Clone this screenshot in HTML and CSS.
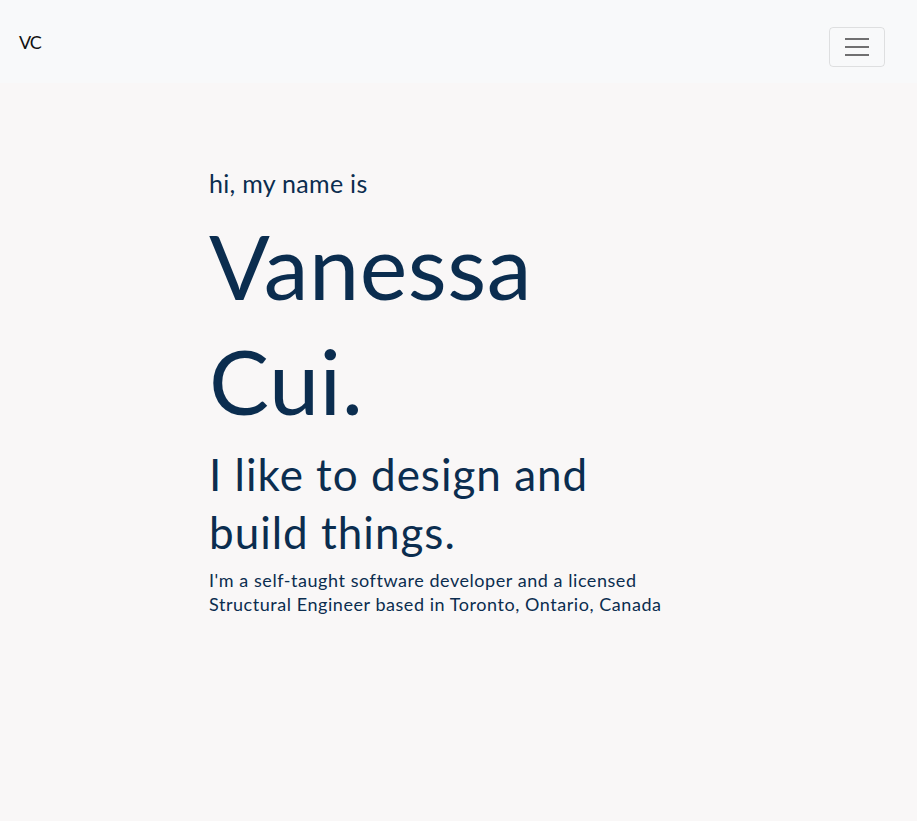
FILE: index.html
```html
<!DOCTYPE html>
<html lang="en">
<head>
<meta charset="utf-8">
<title>Vanessa Cui</title>
<link rel="stylesheet" href="styles.css">
</head>
<body>
<nav class="navbar">
  <a class="brand" href="#">VC</a>
  <button class="toggler" type="button" aria-label="Toggle navigation">
    <svg class="toggler-icon" width="30" height="30" viewBox="0 0 30 30">
      <path d="M3 7h24M3 15h24M3 23h24" stroke="rgba(0,0,0,0.55)" stroke-width="2" fill="none"/>
    </svg>
  </button>
</nav>
<main class="hero">
  <div class="intro">
    <h4 class="greeting">hi, my name is</h4>
    <h1 class="name">Vanessa Cui.</h1>
    <h2 class="tagline">I like to design and build things.</h2>
    <p class="bio">I'm a self-taught software developer and a licensed Structural Engineer based in Toronto, Ontario, Canada</p>
  </div>
</main>
</body>
</html>
```
FILE: styles.css
```css
html, body {
  margin: 0;
  padding: 0;
}
body {
  background: #f9f7f7;
  font-family: "Lato", "Open Sans", sans-serif;
  color: #0b2d4f;
  min-height: 821px;
}
.navbar {
  background: #f8f9fa;
  height: 83px;
  display: flex;
  align-items: flex-start;
  justify-content: space-between;
  padding: 27px 32px 0 19px;
  box-sizing: border-box;
}
.brand {
  color: #111;
  text-decoration: none;
  font-size: 18px;
  line-height: 1.2;
  letter-spacing: -1px;
  margin-top: 5px;
}
.toggler {
  width: 56px;
  height: 40px;
  border: 1px solid rgba(0,0,0,0.1);
  border-radius: 4px;
  background: transparent;
  display: flex;
  align-items: center;
  justify-content: center;
  padding: 0;
}
.hero {
  padding: 85px 0 0 209px;
}
.intro {
  width: 470px;
}
.greeting {
  margin: 0;
  font-size: 25px;
  font-weight: 400;
  line-height: 30px;
  letter-spacing: 0.3px;
}
.name {
  margin: 10px 0 0;
  font-size: 90px;
  font-weight: 400;
  line-height: 115px;
  letter-spacing: 0.5px;
}
.tagline {
  margin: 8px 0 0;
  font-size: 44px;
  font-weight: 400;
  line-height: 57.5px;
  letter-spacing: 1px;
}
.bio {
  margin: 7px 0 0;
  font-size: 18px;
  line-height: 24px;
  letter-spacing: 0.55px;
}
```
